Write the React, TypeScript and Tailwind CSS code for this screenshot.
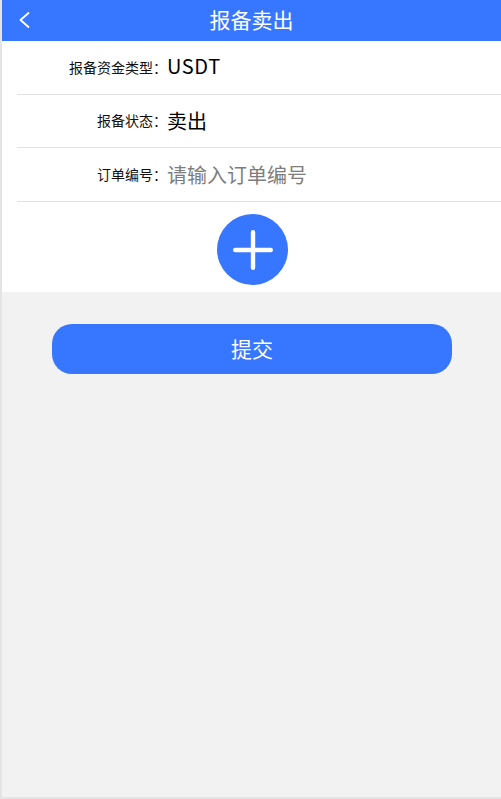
import React from "react";

function Row({ label, children, h, labelPad, valuePad }: { label: string; children: React.ReactNode; h: string; labelPad: string; valuePad: string }) {
  return (
    <div className={`flex items-center ml-[15px] border-b border-[#e3e3e3] ${h}`}>
      <div className={`w-[150px] text-right text-[14px] leading-none text-[#111] whitespace-nowrap ${labelPad}`}>{label}</div>
      <div className={`text-[20px] leading-none text-black ${valuePad}`}>{children}</div>
    </div>
  );
}

export default function App() {
  return (
    <div className="h-[799px] w-[501px] flex flex-col bg-[#f2f2f2] border-l-2 border-b-2 border-[#e4e4e4] font-['Noto_Sans_CJK_SC','Noto_Sans',sans-serif] overflow-hidden">
      <header className="relative h-[41px] shrink-0 bg-[#3776ff] flex items-center justify-center pb-[3px] text-white text-[21px]">
        <svg className="absolute left-[15px] top-[10px]" width="16" height="20" viewBox="0 0 16 20" fill="none">
          <path d="M11.5 3 L3.5 10 L11.5 17" stroke="#fff" strokeWidth="1.8" strokeLinecap="round" strokeLinejoin="round" />
        </svg>
        <span className="leading-none">报备卖出</span>
      </header>
      <section className="bg-white h-[251px] shrink-0">
        <Row label="报备资金类型：" h="h-[54px]" labelPad="pb-[2px]" valuePad="pb-[4px]"><span className="tracking-[0.6px]">USDT</span></Row>
        <Row label="报备状态：" h="h-[53px]" labelPad="pb-[2px]" valuePad="pb-0">卖出</Row>
        <Row label="订单编号：" h="h-[54px]" labelPad="pb-[2px]" valuePad="pb-0"><span className="text-[#7d7d7d]">请输入订单编号</span></Row>
        <div className="flex justify-center pt-[12px] pl-[2px]">
          <div className="w-[71px] h-[71px] rounded-full bg-[#3776ff] flex items-center justify-center">
            <svg width="42" height="42" viewBox="0 0 42 42" fill="none">
              <path d="M21 3.2 V38.8 M3.2 21 H38.8" stroke="#fff" strokeWidth="4.4" strokeLinecap="round" />
            </svg>
          </div>
        </div>
      </section>
      <div className="flex justify-center pt-[32px] pl-[1px]">
        <button className="w-[400px] h-[50px] rounded-[20px] bg-[#3776ff] text-white text-[21px] leading-none pb-[2px]">提交</button>
      </div>
    </div>
  );
}
